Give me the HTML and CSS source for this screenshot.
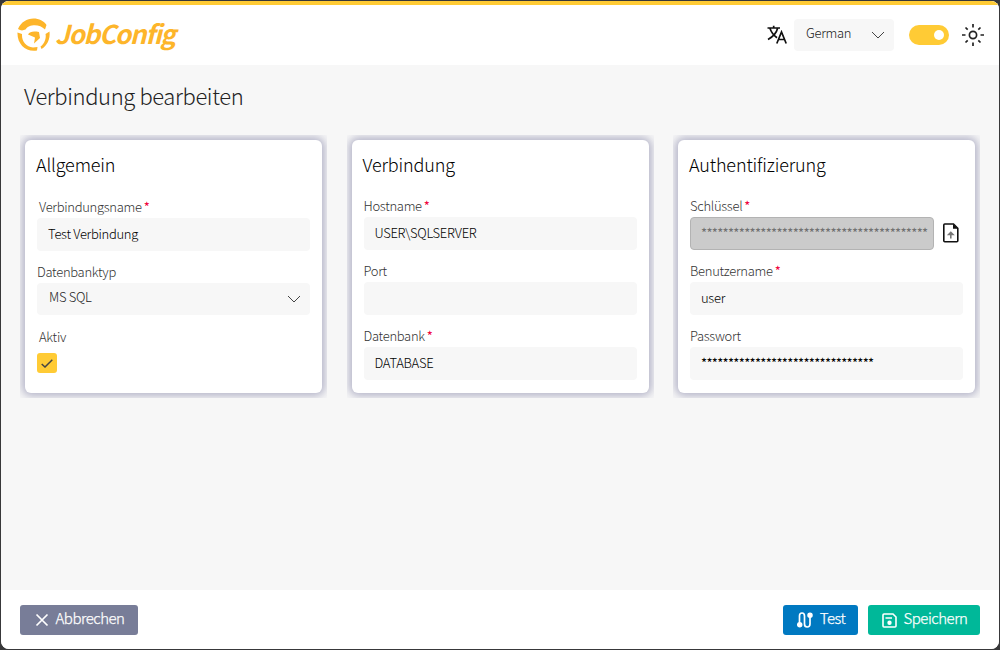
FILE: index.html
```html
<!DOCTYPE html>
<html lang="de">
<head>
  <meta charset="utf-8">
  <title>JobConfig</title>
  <link rel="stylesheet" href="styles.css">
</head>
<body>
<div class="window">
  <header class="header">
    <div class="logo">
      <svg width="34" height="34" viewBox="0 0 34 34" fill="#fdb52a">
        <path d="M1 11C4 4 10 .5 16.500 .5C22 .5 27 3 29.500 7L28 11.500C25 8.500 21 7 16.500 7.300C12 7.600 10 9.500 8.500 11.500L5 12.500L3 12Z"/>
        <path d="M.5 14.500L5 16C4.500 23 9 29 16 29.500L20.500 29L20 32.500C9 34.500 0 26 .5 14.500Z"/>
        <path d="M32.500 13.500C33.500 21 30 28 24.500 31L23.500 28.500C27.500 26 29.500 20 28.500 16Z"/>
        <path d="M11 16.500C13 13.500 16 13 22 14L23 20L17 25.500L18 19.500Z"/>
      </svg>
      <span class="logo-text">JobConfig</span>
    </div>
    <div class="tools">
      <svg class="translate" width="20" height="20" viewBox="0 0 20 20" fill="none" stroke="#111" stroke-width="1.700">
        <path d="M.5 3H13M6.700 .8V3M2.800 3C4.500 8 7.500 11 10 12.800M10.700 3C9.500 8 5.500 12 1 14.500"/>
        <path d="M9.800 18.500L14.500 7L19.200 18.500M11.500 14.500H17.500"/>
      </svg>
      <div class="select language">
        <span>German</span>
        <svg width="14" height="8" viewBox="0 0 14 8" fill="none" stroke="#444"><path d="M1 1L7 7L13 1"/></svg>
      </div>
      <div class="toggle"><div class="knob"></div></div>
      <svg class="sun" width="22" height="22" viewBox="0 0 22 22" fill="none" stroke="#222" stroke-width="1.700">
        <circle cx="11" cy="11" r="3.600"/>
        <path d="M11 0V3.500M11 18.500V22M0 11H3.500M18.500 11H22M3.500 3.500L5.700 5.700M16.300 16.300L18.500 18.500M18.500 3.500L16.300 5.700M5.700 16.300L3.500 18.500"/>
      </svg>
    </div>
  </header>

  <main class="content">
    <h1 class="title">Verbindung bearbeiten</h1>
    <div class="cards">
      <div class="card-wrap">
        <section class="card general">
          <h2 class="card-title">Allgemein</h2>
          <div class="field">
            <label class="label indent">Verbindungsname<span class="required">*</span></label>
            <input class="input" value="Test Verbindung">
          </div>
          <div class="field">
            <label class="label">Datenbanktyp</label>
            <div class="select">
              <span>MS SQL</span>
              <svg width="14" height="8" viewBox="0 0 14 8" fill="none" stroke="#444"><path d="M1 1L7 7L13 1"/></svg>
            </div>
          </div>
          <div class="field">
            <label class="label indent">Aktiv</label>
            <div class="checkbox">
              <svg width="12" height="9" viewBox="0 0 12 9" fill="none" stroke="#444" stroke-width="1.500"><path d="M.7 5L4 8L11.300 .8"/></svg>
            </div>
          </div>
        </section>
      </div>

      <div class="card-wrap">
        <section class="card">
          <h2 class="card-title">Verbindung</h2>
          <div class="field">
            <label class="label">Hostname<span class="required">*</span></label>
            <input class="input" value="USER\SQLSERVER">
          </div>
          <div class="field">
            <label class="label">Port</label>
            <input class="input" value="">
          </div>
          <div class="field">
            <label class="label">Datenbank<span class="required">*</span></label>
            <input class="input" value="DATABASE">
          </div>
        </section>
      </div>

      <div class="card-wrap">
        <section class="card">
          <h2 class="card-title">Authentifizierung</h2>
          <div class="field">
            <label class="label">Schlüssel<span class="required">*</span></label>
            <div class="key-row">
              <input class="input secret locked" value="******************************************" readonly>
              <svg class="upload" width="16" height="20" viewBox="0 0 16 20" fill="none" stroke="#111" stroke-width="1.600">
                <path d="M1.800 1H10.500L14.800 5.300V17.700Q14.800 18.700 13.800 18.700H1.800Q.8 18.700 .8 17.700V2Q.8 1 1.800 1Z"/>
                <path d="M10 1V5.800H15Z" fill="#111" stroke="none"/>
                <path d="M7.800 15.500V10" stroke="#777"/>
                <path d="M3.800 12.300L7.800 8.300L11.800 12.300Z" fill="#777" stroke="none"/>
              </svg>
            </div>
          </div>
          <div class="field">
            <label class="label">Benutzername<span class="required">*</span></label>
            <input class="input" value="user">
          </div>
          <div class="field">
            <label class="label">Passwort</label>
            <input class="input secret" value="********************************">
          </div>
        </section>
      </div>
    </div>
  </main>

  <footer class="footer">
    <button class="btn btn-cancel">
      <svg width="14" height="14" viewBox="0 0 14 14" fill="none" stroke="#fff" stroke-width="1.700"><path d="M1.500 1.500L12.500 12.500M12.500 1.500L1.500 12.500"/></svg>
      <span>Abbrechen</span>
    </button>
    <div class="actions">
      <button class="btn btn-test">
        <svg width="16" height="16" viewBox="0 0 16 16" fill="none" stroke="#fff" stroke-width="1.700">
          <path d="M2.500 12V4Q2.500 1 5 1T7.500 4V12Q7.500 15 10.200 15T13 12V4"/>
          <circle cx="2.700" cy="12.800" r="1.900" fill="#fff"/>
          <circle cx="13" cy="3.200" r="1.900" fill="#fff"/>
        </svg>
        <span>Test</span>
      </button>
      <button class="btn btn-save">
        <svg width="15" height="15" viewBox="0 0 15 15" fill="none" stroke="#fff" stroke-width="1.600">
          <path d="M1 2Q1 1 2 1H11L14 4V13Q14 14 13 14H2Q1 14 1 13Z"/>
          <path d="M3.500 5H10"/>
          <circle cx="7.500" cy="9.800" r="1.400" fill="#fff"/>
        </svg>
        <span>Speichern</span>
      </button>
    </div>
  </footer>
</div>
</body>
</html>
```
FILE: styles.css
```css
* {
  box-sizing: border-box;
}

body {
  margin: 0;
  height: 650px;
  padding: 1px;
  overflow: hidden;
  background: #38383a;
  font-family: "Noto Sans CJK JP", "Noto Sans", sans-serif;
  font-weight: 300;
  color: #222;
}

.window {
  display: flex;
  flex-direction: column;
  height: 648px;
  border-radius: 8px;
  overflow: hidden;
  background: #f7f7f7;
}

.header {
  display: flex;
  justify-content: space-between;
  height: 64px;
  padding: 0 15px 0 16px;
  border-top: 4px solid #ffcb35;
  background: #fff;
}

.logo {
  display: flex;
  align-items: center;
  gap: 4px;
}

.logo-text {
  padding-bottom: 4px;
  font-size: 26px;
  font-weight: 700;
  font-style: italic;
  line-height: 34px;
  letter-spacing: -1.25px;
  color: #fdb52a;
}

.tools {
  display: flex;
  align-items: center;
}

.language {
  width: 100px;
  margin: 0 15px 0 7px;
}

.toggle {
  display: flex;
  justify-content: flex-end;
  align-items: center;
  width: 40px;
  height: 20px;
  padding-right: 5px;
  margin-right: 13px;
  border-radius: 10px;
  background: #ffcb35;
}

.knob {
  width: 10px;
  height: 10px;
  border-radius: 50%;
  background: #fff;
}

.content {
  flex: 1;
  padding: 15px 19px 0;
}

.title {
  margin: 0 0 25px 4px;
  font-size: 22px;
  font-weight: 300;
  line-height: 30px;
  letter-spacing: -0.38px;
  color: #222;
}

.cards {
  display: grid;
  grid-template-columns: repeat(3, 307px);
  justify-content: space-between;
}

.card-wrap {
  height: 263px;
  padding: 5px;
  overflow: hidden;
}

.card {
  height: 253px;
  padding: 10px 12px 0;
  border-radius: 6px;
  background: #fff;
  box-shadow: 0 0 8px 3px #b4b4c8;
}

.card-title {
  margin: 0 0 17px -1px;
  font-size: 18px;
  font-weight: 300;
  line-height: 28px;
  letter-spacing: -0.15px;
  color: #000;
}

.general .card-title {
  margin-bottom: 18px;
}

.field {
  height: 65px;
}

.label {
  display: block;
  height: 22px;
  font-size: 13px;
  line-height: 22px;
  letter-spacing: -0.3px;
  color: #333;
}

.indent {
  padding-left: 2px;
}

.required {
  margin-left: 2px;
  font-weight: 400;
  color: #f0003c;
}

.input {
  display: block;
  width: 273px;
  height: 33px;
  padding: 0 11px 2px;
  border: 0;
  border-radius: 4px;
  background: #f7f7f7;
  font: inherit;
  font-size: 13px;
  letter-spacing: -0.3px;
  color: #000;
}

.key-row {
  display: flex;
  align-items: center;
  gap: 9px;
}

.upload {
  margin-bottom: 2px;
}

.secret {
  font-weight: 400;
  letter-spacing: -0.68px;
}

.locked {
  width: 244px;
  padding-left: 10px;
  padding-right: 2px;
  border: 1px solid #b3b3b3;
  background: #cbcbcb;
  color: #707070;
}

.select {
  display: flex;
  justify-content: space-between;
  align-items: center;
  height: 32px;
  padding: 0 9px 0 12px;
  border-radius: 4px;
  background: #f7f7f7;
  font-size: 13px;
  letter-spacing: -0.3px;
}

.select span {
  padding-bottom: 5px;
}

.checkbox {
  display: flex;
  justify-content: center;
  align-items: center;
  width: 20px;
  height: 20px;
  margin-top: 5px;
  border-radius: 3px;
  background: #ffcb35;
}

.footer {
  display: flex;
  justify-content: space-between;
  height: 59px;
  padding: 15px 19px 0;
  background: #fff;
}

.actions {
  display: flex;
  gap: 10px;
}

.btn {
  display: flex;
  align-items: center;
  justify-content: center;
  gap: 7px;
  height: 30px;
  padding: 0 0 0 1px;
  border: 0;
  border-radius: 3px;
  font: inherit;
  font-size: 15px;
  line-height: 26px;
  letter-spacing: -0.5px;
  color: #fff;
  -webkit-text-stroke: 0.25px #fff;
}

.btn span {
  padding-bottom: 4px;
}

.btn-cancel {
  width: 118px;
  background: #787d98;
}

.btn-test {
  width: 75px;
  background: #0079c1;
}

.btn-save {
  width: 112px;
  background: #00b899;
}
```
